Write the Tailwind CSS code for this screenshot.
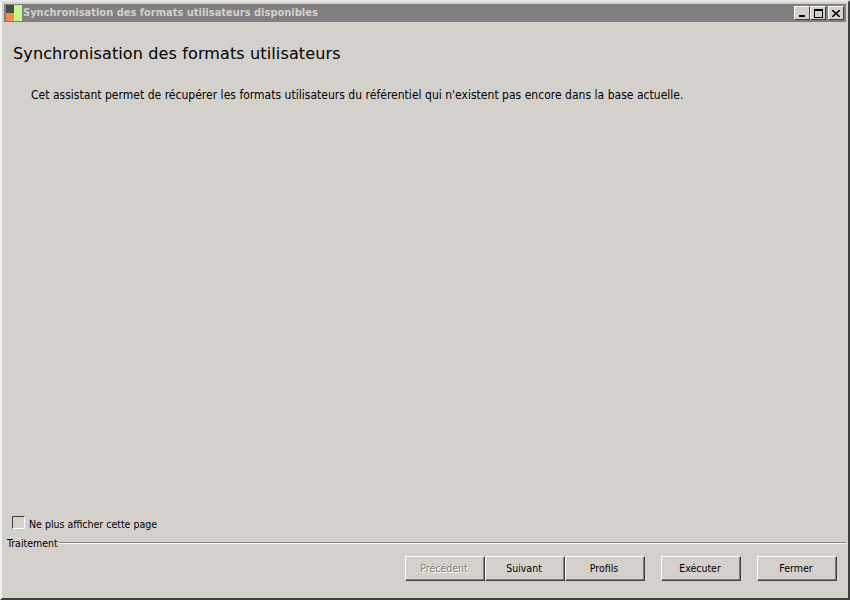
<!DOCTYPE html>
<html lang="fr">
<head>
  <meta charset="UTF-8">
  <title>Synchronisation des formats utilisateurs disponibles</title>
  <script src="https://cdn.jsdelivr.net/npm/@tailwindcss/browser@4"></script>
</head>
<body class="bg-[#d4d1cc]">
  <div class="w-[850px] h-[600px] flex flex-col overflow-hidden bg-[#d4d1cc] border-t-2 border-l-2 border-t-[#e8e6e1] border-l-[#f4f3f0] border-r-2 border-b-2 border-r-[#404040] border-b-[#404040] pt-[2px] pl-[2px] pr-[2px] font-['DejaVu_Sans_Condensed','DejaVu_Sans',sans-serif] text-[10.5px] text-black">

    <!-- Title bar -->
    <div class="h-[18px] flex items-center bg-[#808080] shrink-0 pr-[2px]">
      <svg width="16" height="16" viewBox="0 0 16 16" class="shrink-0 ml-[2px]">
        <rect x="0" y="0" width="8" height="8" fill="#4a4a4a"/>
        <rect x="0" y="8" width="8" height="8" fill="#f58c4c"/>
        <rect x="8" y="0" width="8" height="16" fill="#c6f58c"/>
      </svg>
      <span class="ml-[1px] text-[11px] font-bold text-[#d4d1cc] whitespace-nowrap">Synchronisation des formats utilisateurs disponibles</span>
      <div class="ml-auto flex">
        <button class="w-[16px] h-[14px] bg-[#d4d1cc] border border-t-white border-l-white border-r-[#404040] border-b-[#404040] flex items-end justify-center pb-[2px]">
          <span class="block w-[6px] h-[2px] bg-black"></span>
        </button>
        <button class="w-[16px] h-[14px] bg-[#d4d1cc] border border-t-white border-l-white border-r-[#404040] border-b-[#404040] flex items-center justify-center">
          <span class="block w-[9px] h-[9px] border border-t-2 border-black"></span>
        </button>
        <button class="w-[16px] h-[14px] ml-[2px] bg-[#d4d1cc] border border-t-white border-l-white border-r-[#404040] border-b-[#404040] flex items-center justify-center">
          <svg width="8" height="7" viewBox="0 0 8 7"><path d="M0 0L8 7M8 0L0 7" stroke="#000" stroke-width="1.5"/></svg>
        </button>
      </div>
    </div>

    <!-- Page content -->
    <div class="flex-1 flex flex-col pl-[9px]">
      <h1 class="mt-[22px] text-[16px] leading-[20px] font-normal font-['DejaVu_Sans',sans-serif] tracking-[0.13px] whitespace-nowrap">Synchronisation des formats utilisateurs</h1>
      <p class="mt-[24px] ml-[18px] text-[12px] leading-[14px] tracking-[0.02px] whitespace-nowrap">Cet assistant permet de récupérer les formats utilisateurs du référentiel qui n'existent pas encore dans la base actuelle.</p>

      <label class="mt-auto flex items-center -ml-[1px]">
        <span class="w-[13px] h-[13px] bg-[#d4d1cc] border border-t-[#404040] border-l-[#404040] border-r-white border-b-white shrink-0"></span>
        <span class="ml-[4px] leading-[14px] relative top-[2px]">Ne plus afficher cette page</span>
      </label>
    </div>

    <!-- Traitement group -->
    <div class="shrink-0 mt-[7px] pl-[3px]">
      <div class="flex items-center h-[14px]">
        <span class="leading-[14px]">Traitement</span>
        <span class="flex-1 ml-[1px] h-[2px] border-t border-t-[#808080] border-b border-b-white"></span>
      </div>
      <div class="flex justify-end pr-[9px] pt-[6px] pb-[17px]">
        <button disabled class="w-[80px] h-[25px] pr-[2px] bg-[#d4d1cc] border border-t-white border-l-white border-r-[#404040] border-b-[#404040] shadow-[inset_-1px_-1px_0_#808080] text-[#808080] [text-shadow:1px_1px_0_white]">Précédent</button>
        <button class="w-[80px] h-[25px] pr-[2px] bg-[#d4d1cc] border border-t-white border-l-white border-r-[#404040] border-b-[#404040] shadow-[inset_-1px_-1px_0_#808080]">Suivant</button>
        <button class="w-[80px] h-[25px] pr-[2px] bg-[#d4d1cc] border border-t-white border-l-white border-r-[#404040] border-b-[#404040] shadow-[inset_-1px_-1px_0_#808080]">Profils</button>
        <button class="w-[80px] h-[25px] pr-[2px] ml-[16px] bg-[#d4d1cc] border border-t-white border-l-white border-r-[#404040] border-b-[#404040] shadow-[inset_-1px_-1px_0_#808080]">Exécuter</button>
        <button class="w-[80px] h-[25px] pr-[2px] ml-[16px] bg-[#d4d1cc] border border-t-white border-l-white border-r-[#404040] border-b-[#404040] shadow-[inset_-1px_-1px_0_#808080]">Fermer</button>
      </div>
    </div>
  </div>
</body>
</html>
